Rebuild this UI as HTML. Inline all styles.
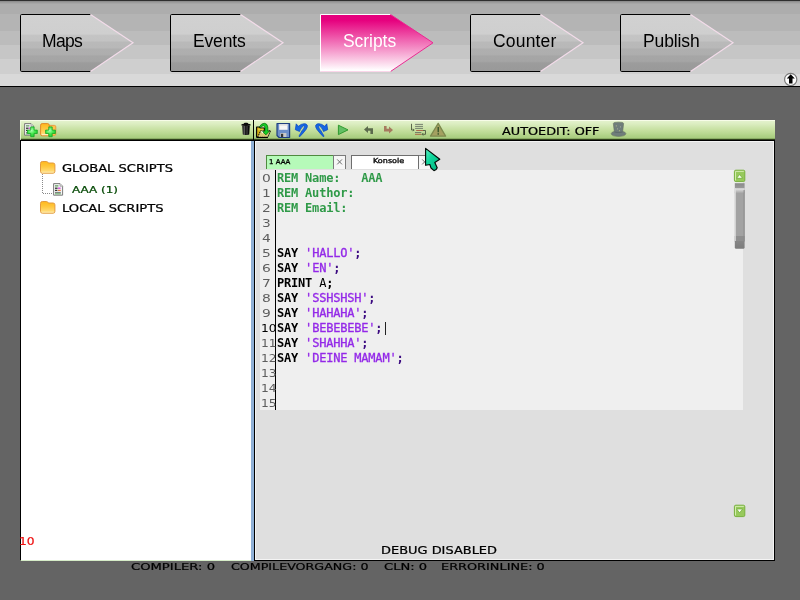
<!DOCTYPE html>
<html lang="de">
<head>
<meta charset="utf-8">
<title>Scripts</title>
<style>
html,body{margin:0;padding:0;}
body{width:800px;height:600px;overflow:hidden;background:#646464;position:relative;font-family:"Liberation Sans",sans-serif;}
.abs{position:absolute;}
#topbar{left:0;top:0;width:800px;height:87px;
 background:linear-gradient(to bottom,#2f2f2f 0px,#2f2f2f 1px,#8e8e8e 1px,#8e8e8e 2px,#9c9c9c 2px,#9c9c9c 3px,#a6a6a6 3px,#a6a6a6 4px,#adadad 4px,#adadad 14px,#b4b4b4 14px,#b4b4b4 31px,#bcbcbc 31px,#bcbcbc 45px,#c6c6c6 45px,#c6c6c6 59px,#cfcfcf 59px,#cfcfcf 74px,#d9d9d9 74px,#d9d9d9 86px,#000 86px,#000 87px);}
.nav{top:13px;width:116px;height:60px;}
.nav svg{position:absolute;left:0;top:0;}
.nav span{will-change:transform;position:absolute;left:23.6px;top:17px;text-align:left;font-size:17.5px;line-height:22px;color:#000;white-space:nowrap;}
.nav.on span{color:#fff;}
.px{will-change:transform;font-family:"DejaVu Sans","Liberation Sans",sans-serif;text-transform:uppercase;white-space:nowrap;line-height:1;}
#tbar{left:20px;top:120px;width:755px;height:20px;box-shadow:inset 1px 0 0 rgba(240,250,225,0.8);background:linear-gradient(to bottom,#f7fce8 0,#f7fce8 1px,#e3f2cc 1px,#dbedc0 4px,#d0e6b0 7px,#c6e0a0 10px,#bbd993 13px,#aed185 16px,#a8cc7f 18px,#8aac64 18px,#8aac64 19px,#2f3e1c 19px,#2f3e1c 20px);}
#tbarline{left:20px;top:140px;width:755px;height:1px;background:#000;}
#tdiv{left:253px;top:120px;width:1px;height:20px;background:#000;}
#lpanel{left:20px;top:141px;width:231px;height:420px;background:#fff;border-left:1px solid #000;box-sizing:border-box;border-bottom:1px solid #d6ecc8;}
#split{left:251px;top:141px;width:3px;height:420px;background:#8fb0d6;}
#rpanel{left:254px;top:141px;width:521px;height:420px;box-sizing:border-box;background:#dfdfdf;border-left:1px solid #000;border-right:1px solid #000;border-bottom:1px solid #000;box-shadow:inset 1px 1px 0 #f4f4f4,inset -1px -1px 0 #f4f4f4;}
#editor{left:260px;top:170px;width:483px;height:240px;background:#efefef;}
#gutterline{left:275px;top:170px;width:1px;height:240px;background:#000;}
.ln{left:261px;width:15px;height:15px;font-size:9.5px;color:#666;}
.code{will-change:transform;left:277px;margin-top:1px;height:15px;line-height:15px;font-family:"DejaVu Sans Mono","Liberation Mono",monospace;font-size:12px;letter-spacing:-0.2px;white-space:pre;color:#000;}
.code b{font-weight:bold;}
.rem{color:#2f9a48;font-weight:bold;}
.str{color:#9328e8;-webkit-text-stroke:0.3px #9328e8;}
.sem{color:#3b0a80;font-weight:bold;}
</style>
</head>
<body>
<div id="topbar" class="abs"></div>

<svg width="0" height="0" style="position:absolute">
 <defs>
  <linearGradient id="gGray" x1="0" y1="0" x2="0" y2="1">
   <stop offset="0" stop-color="#d1d1d1"/><stop offset="0.34" stop-color="#cfcfcf"/><stop offset="0.37" stop-color="#c4c4c4"/><stop offset="0.46" stop-color="#c3c3c3"/><stop offset="0.49" stop-color="#b9b9b9"/><stop offset="0.58" stop-color="#b8b8b8"/><stop offset="0.61" stop-color="#afafaf"/><stop offset="0.7" stop-color="#aeaeae"/><stop offset="0.73" stop-color="#a6a6a6"/><stop offset="0.82" stop-color="#a5a5a5"/><stop offset="0.85" stop-color="#9c9c9c"/><stop offset="1" stop-color="#999999"/>
  </linearGradient>
  <linearGradient id="gPink" x1="0" y1="0" x2="0" y2="1">
   <stop offset="0" stop-color="#e5007d"/><stop offset="0.1" stop-color="#e6007e"/><stop offset="0.98" stop-color="#ffffff"/><stop offset="1" stop-color="#ffffff"/>
  </linearGradient>
 </defs>
</svg>

<div class="abs nav" style="left:19px"><svg width="116" height="60" viewBox="0 0 116 60"><path d="M3.5 1.5 H71.5 L114 29.8 L71.5 58.5 H2.7 Q1.5 58.5 1.5 57.3 V2.7 Q1.5 1.5 2.7 1.5 Z" fill="url(#gGray)"/><path d="M71.5 58.5 H2.7 Q1.5 58.5 1.5 57.3 V2.7 Q1.5 1.5 2.7 1.5 H71.5" fill="none" stroke="#000" stroke-width="1"/><path d="M71.5 1.5 L114 29.8 L71.5 58.5" fill="none" stroke="#f3dcea" stroke-width="1.2"/></svg><span style="letter-spacing:-0.7px;margin-left:-1px">Maps</span></div>
<div class="abs nav" style="left:169px"><svg width="116" height="60" viewBox="0 0 116 60"><path d="M3.5 1.5 H71.5 L114 29.8 L71.5 58.5 H2.7 Q1.5 58.5 1.5 57.3 V2.7 Q1.5 1.5 2.7 1.5 Z" fill="url(#gGray)"/><path d="M71.5 58.5 H2.7 Q1.5 58.5 1.5 57.3 V2.7 Q1.5 1.5 2.7 1.5 H71.5" fill="none" stroke="#000" stroke-width="1"/><path d="M71.5 1.5 L114 29.8 L71.5 58.5" fill="none" stroke="#f3dcea" stroke-width="1.2"/></svg><span style="letter-spacing:-0.17px">Events</span></div>
<div class="abs nav on" style="left:319px"><svg width="116" height="60" viewBox="0 0 116 60"><path d="M1.5 1.5 H71.5 L114 29.8 L71.5 58.5 H1.5 Z" fill="url(#gPink)"/><path d="M1.5 58.5 V1.5 H71.5" fill="none" stroke="#fff" stroke-width="1"/><path d="M71.5 1.5 L114 29.8 L71.5 58.5" fill="none" stroke="#ea2a92" stroke-width="1"/><path d="M71.5 58.5 H1.5" fill="none" stroke="#fbd6ea" stroke-width="1"/></svg><span style="letter-spacing:-0.05px">Scripts</span></div>
<div class="abs nav" style="left:469px"><svg width="116" height="60" viewBox="0 0 116 60"><path d="M3.5 1.5 H71.5 L114 29.8 L71.5 58.5 H2.7 Q1.5 58.5 1.5 57.3 V2.7 Q1.5 1.5 2.7 1.5 Z" fill="url(#gGray)"/><path d="M71.5 58.5 H2.7 Q1.5 58.5 1.5 57.3 V2.7 Q1.5 1.5 2.7 1.5 H71.5" fill="none" stroke="#000" stroke-width="1"/><path d="M71.5 1.5 L114 29.8 L71.5 58.5" fill="none" stroke="#f3dcea" stroke-width="1.2"/></svg><span style="letter-spacing:0.18px">Counter</span></div>
<div class="abs nav" style="left:619px"><svg width="116" height="60" viewBox="0 0 116 60"><path d="M3.5 1.5 H71.5 L114 29.8 L71.5 58.5 H2.7 Q1.5 58.5 1.5 57.3 V2.7 Q1.5 1.5 2.7 1.5 Z" fill="url(#gGray)"/><path d="M71.5 58.5 H2.7 Q1.5 58.5 1.5 57.3 V2.7 Q1.5 1.5 2.7 1.5 H71.5" fill="none" stroke="#000" stroke-width="1"/><path d="M71.5 1.5 L114 29.8 L71.5 58.5" fill="none" stroke="#f3dcea" stroke-width="1.2"/></svg><span style="letter-spacing:-0.13px">Publish</span></div>

<!-- collapse icon -->
<svg class="abs" style="left:783px;top:72px" width="16" height="16" viewBox="0 0 16 16"><circle cx="7.7" cy="7.4" r="6.1" fill="#fff" stroke="#5e5e5e" stroke-opacity="0.8" stroke-width="1.2"/><path d="M7.7 2.2 L11.8 6.6 H9.5 V11.6 H6 V6.6 H3.7 Z" fill="#000"/></svg>

<!-- PANELS -->
<div id="tbar" class="abs"></div>
<div id="tbarline" class="abs"></div>
<div id="tdiv" class="abs"></div>
<div id="lpanel" class="abs"></div>
<div id="split" class="abs"></div>
<div id="rpanel" class="abs"></div>
<div id="editor" class="abs"></div>
<div id="gutterline" class="abs"></div>

<!--TEXTS-->
<svg class="abs px" style="left:61.5px;top:162.5px" width="113.0" height="13"><text x="0" y="9.0" font-size="9.60" fill="#000" stroke="#000" stroke-width="0.22" textLength="111.0" lengthAdjust="spacingAndGlyphs">Global Scripts</text></svg>
<svg class="abs px" style="left:71.5px;top:184px" width="48.0" height="12"><text x="0" y="8.699999999999989" font-size="9.19" fill="#064a06" stroke="#064a06" stroke-width="0.22" textLength="46.0" lengthAdjust="spacingAndGlyphs">AAA (1)</text></svg>
<svg class="abs px" style="left:61.5px;top:202.5px" width="103.5" height="13"><text x="0" y="9.0" font-size="9.60" fill="#000" stroke="#000" stroke-width="0.22" textLength="101.5" lengthAdjust="spacingAndGlyphs">Local Scripts</text></svg>
<svg class="abs px" style="left:501.5px;top:125.6px" width="99.5" height="13"><text x="0" y="9.0" font-size="9.60" fill="#000" stroke="#000" stroke-width="0.22" textLength="97.5" lengthAdjust="spacingAndGlyphs">AutoEdit: OFF</text></svg>
<svg class="abs px" style="left:381px;top:545px" width="118" height="13"><text x="0" y="9" font-size="9.60" fill="#000" stroke="#000" stroke-width="0.22" textLength="116" lengthAdjust="spacingAndGlyphs">Debug disabled</text></svg>
<svg class="abs px" style="left:131px;top:561px" width="86" height="12"><text x="0" y="8.799999999999955" font-size="9.33" fill="#000" stroke="#000" stroke-width="0.22" textLength="84" lengthAdjust="spacingAndGlyphs">Compiler: 0</text></svg>
<svg class="abs px" style="left:230.5px;top:561px" width="139.5" height="12"><text x="0" y="8.799999999999955" font-size="9.33" fill="#000" stroke="#000" stroke-width="0.22" textLength="137.5" lengthAdjust="spacingAndGlyphs">Compilevorgang: 0</text></svg>
<svg class="abs px" style="left:383.5px;top:561px" width="45.10000000000002" height="12"><text x="0" y="8.799999999999955" font-size="9.33" fill="#000" stroke="#000" stroke-width="0.22" textLength="43.10000000000002" lengthAdjust="spacingAndGlyphs">CLN: 0</text></svg>
<svg class="abs px" style="left:441.2px;top:561px" width="105.80000000000001" height="12"><text x="0" y="8.799999999999955" font-size="9.33" fill="#000" stroke="#000" stroke-width="0.22" textLength="103.80000000000001" lengthAdjust="spacingAndGlyphs">ErrorInLine: 0</text></svg>
<svg class="abs px" style="left:19.2px;top:535.6px" width="17" height="13"><text x="0" y="9.4" font-size="10.15" fill="#ee1111" stroke="#ee1111" stroke-width="0.22" textLength="15.6" lengthAdjust="spacingAndGlyphs">10</text></svg>
<!--EDITOR-->
<svg class="abs px" style="left:262.1px;top:173px" width="9.8" height="13"><text x="0" y="9" font-size="9.60" fill="#5e5e5e" textLength="8.8" lengthAdjust="spacingAndGlyphs">0</text></svg>
<svg class="abs px" style="left:262.1px;top:188px" width="9.8" height="13"><text x="0" y="9" font-size="9.60" fill="#5e5e5e" textLength="8.8" lengthAdjust="spacingAndGlyphs">1</text></svg>
<svg class="abs px" style="left:262.1px;top:203px" width="9.8" height="13"><text x="0" y="9" font-size="9.60" fill="#5e5e5e" textLength="8.8" lengthAdjust="spacingAndGlyphs">2</text></svg>
<svg class="abs px" style="left:262.1px;top:218px" width="9.8" height="13"><text x="0" y="9" font-size="9.60" fill="#5e5e5e" textLength="8.8" lengthAdjust="spacingAndGlyphs">3</text></svg>
<svg class="abs px" style="left:262.1px;top:233px" width="9.8" height="13"><text x="0" y="9" font-size="9.60" fill="#5e5e5e" textLength="8.8" lengthAdjust="spacingAndGlyphs">4</text></svg>
<svg class="abs px" style="left:262.1px;top:248px" width="9.8" height="13"><text x="0" y="9" font-size="9.60" fill="#5e5e5e" textLength="8.8" lengthAdjust="spacingAndGlyphs">5</text></svg>
<svg class="abs px" style="left:262.1px;top:263px" width="9.8" height="13"><text x="0" y="9" font-size="9.60" fill="#5e5e5e" textLength="8.8" lengthAdjust="spacingAndGlyphs">6</text></svg>
<svg class="abs px" style="left:262.1px;top:278px" width="9.8" height="13"><text x="0" y="9" font-size="9.60" fill="#5e5e5e" textLength="8.8" lengthAdjust="spacingAndGlyphs">7</text></svg>
<svg class="abs px" style="left:262.1px;top:293px" width="9.8" height="13"><text x="0" y="9" font-size="9.60" fill="#5e5e5e" textLength="8.8" lengthAdjust="spacingAndGlyphs">8</text></svg>
<svg class="abs px" style="left:262.1px;top:308px" width="9.8" height="13"><text x="0" y="9" font-size="9.60" fill="#5e5e5e" textLength="8.8" lengthAdjust="spacingAndGlyphs">9</text></svg>
<svg class="abs px" style="left:260.8px;top:323px" width="16.6" height="13"><text x="0" y="9" font-size="9.60" fill="#000" textLength="15.6" lengthAdjust="spacingAndGlyphs">10</text></svg>
<svg class="abs px" style="left:260.8px;top:338px" width="16.6" height="13"><text x="0" y="9" font-size="9.60" fill="#5e5e5e" textLength="15.6" lengthAdjust="spacingAndGlyphs">11</text></svg>
<svg class="abs px" style="left:260.8px;top:353px" width="16.6" height="13"><text x="0" y="9" font-size="9.60" fill="#5e5e5e" textLength="15.6" lengthAdjust="spacingAndGlyphs">12</text></svg>
<svg class="abs px" style="left:260.8px;top:368px" width="16.6" height="13"><text x="0" y="9" font-size="9.60" fill="#5e5e5e" textLength="15.6" lengthAdjust="spacingAndGlyphs">13</text></svg>
<svg class="abs px" style="left:260.8px;top:383px" width="16.6" height="13"><text x="0" y="9" font-size="9.60" fill="#5e5e5e" textLength="15.6" lengthAdjust="spacingAndGlyphs">14</text></svg>
<svg class="abs px" style="left:260.8px;top:398px" width="16.6" height="13"><text x="0" y="9" font-size="9.60" fill="#5e5e5e" textLength="15.6" lengthAdjust="spacingAndGlyphs">15</text></svg>
<div class="abs" style="left:266px;top:155px;width:67px;height:14px;box-sizing:border-box;background:#b6fab9;border-top:1px solid #4f8a3f;border-left:1px solid #4f8a3f;"></div>
<div class="abs" style="left:333px;top:155px;width:13px;height:14px;box-sizing:border-box;background:#f6f6f6;border:1px solid #7a7a7a;border-bottom:none;"></div>
<svg class="abs" style="left:333px;top:155px" width="13" height="14"><path d="M4.2 4.4 L9 9.4 M9 4.4 L4.2 9.4" stroke="#707070" stroke-width="1" fill="none"/></svg>
<div class="abs" style="left:351px;top:155px;width:68px;height:14px;box-sizing:border-box;background:#fff;border:1px solid #6e6e6e;border-bottom:none;"></div>
<div class="abs" style="left:419px;top:155px;width:13px;height:14px;box-sizing:border-box;background:#f6f6f6;border:1px solid #7a7a7a;border-left:none;border-bottom:none;"></div>
<svg class="abs" style="left:419px;top:155px" width="13" height="14"><path d="M3.2 4.4 L8 9.4 M8 4.4 L3.2 9.4" stroke="#707070" stroke-width="1" fill="none"/></svg>
<svg class="abs px" style="left:268.8px;top:157.2px" width="23.399999999999977" height="10"><text x="0" y="6.800000000000011" font-size="6.58" fill="#000" stroke="#000" stroke-width="0.3" textLength="21.399999999999977" lengthAdjust="spacingAndGlyphs">1 AAA</text></svg>
<svg class="abs px" style="text-transform:none;left:372.8px;top:155.8px" width="33.19999999999999" height="11"><text x="0" y="7.0" font-size="6.86" fill="#000" stroke="#000" stroke-width="0.3" textLength="31.19999999999999" lengthAdjust="spacingAndGlyphs">Konsole</text></svg>
<div class="abs code" style="top:170px"><span class="rem">REM Name:   AAA</span></div>
<div class="abs code" style="top:185px"><span class="rem">REM Author:</span></div>
<div class="abs code" style="top:200px"><span class="rem">REM Email:</span></div>
<div class="abs code" style="top:245px"><b>SAY</b> <span class="str">'HALLO'</span><span class="sem">;</span></div>
<div class="abs code" style="top:260px"><b>SAY</b> <span class="str">'EN'</span><span class="sem">;</span></div>
<div class="abs code" style="top:275px"><b>PRINT</b> A<b>;</b></div>
<div class="abs code" style="top:290px"><b>SAY</b> <span class="str">'SSHSHSH'</span><span class="sem">;</span></div>
<div class="abs code" style="top:305px"><b>SAY</b> <span class="str">'HAHAHA'</span><span class="sem">;</span></div>
<div class="abs code" style="top:320px"><b>SAY</b> <span class="str">'BEBEBEBE'</span><span class="sem">;</span></div>
<div class="abs code" style="top:335px"><b>SAY</b> <span class="str">'SHAHHA'</span><span class="sem">;</span></div>
<div class="abs code" style="top:350px"><b>SAY</b> <span class="str">'DEINE MAMAM'</span><span class="sem">;</span></div>
<div class="abs" style="left:385px;top:322px;width:1px;height:13px;background:#222"></div>

<!--ICONS-->
<svg width="0" height="0" style="position:absolute"><defs>
 <linearGradient id="gFold" x1="0" y1="0" x2="0" y2="1"><stop offset="0" stop-color="#ffb81c"/><stop offset="0.45" stop-color="#ffc840"/><stop offset="1" stop-color="#ffe28e"/></linearGradient>
 <radialGradient id="gPlus" cx="0.4" cy="0.35" r="0.7"><stop offset="0" stop-color="#b4ffb4"/><stop offset="0.5" stop-color="#48e850"/><stop offset="1" stop-color="#1cc82c"/></radialGradient>
 <linearGradient id="gTrash" x1="0" y1="0" x2="1" y2="0"><stop offset="0" stop-color="#0a0a0a"/><stop offset="0.3" stop-color="#5a5a5a"/><stop offset="0.45" stop-color="#141414"/><stop offset="0.65" stop-color="#3c3c3c"/><stop offset="0.8" stop-color="#0a0a0a"/><stop offset="1" stop-color="#000"/></linearGradient>
 <linearGradient id="gCur" x1="0" y1="0" x2="1" y2="1"><stop offset="0" stop-color="#5cf0c4"/><stop offset="0.4" stop-color="#10d69c"/><stop offset="1" stop-color="#00b07c"/></linearGradient>
 <linearGradient id="gThumb" x1="0" y1="0" x2="1" y2="0"><stop offset="0" stop-color="#d4d4d4"/><stop offset="0.25" stop-color="#a6a6a6"/><stop offset="0.75" stop-color="#a0a0a0"/><stop offset="1" stop-color="#8a8a8a"/></linearGradient>
 <linearGradient id="gThumbT" x1="0" y1="0" x2="0" y2="1"><stop offset="0" stop-color="#8a8a8a"/><stop offset="1" stop-color="#9c9c9c"/></linearGradient>
 <linearGradient id="gThumbB" x1="0" y1="0" x2="0" y2="1"><stop offset="0" stop-color="#868686"/><stop offset="1" stop-color="#7c7c7c"/></linearGradient>
 <g id="plus"><path d="M3.8 0.6 h3.4 v3.2 h3.2 v3.4 h-3.2 v3.2 h-3.4 v-3.2 h-3.2 v-3.4 h3.2 z" fill="url(#gPlus)" stroke="#18a826" stroke-width="0.8" stroke-linejoin="round"/></g>
 <g id="folder"><path d="M1.5 3.4 Q1.5 1.5 3.4 1.5 H7.4 Q8.8 1.5 9.4 3 H14 Q15.9 3 15.9 4.8 V11.4 Q15.9 13.2 14 13.2 H3.4 Q1.5 13.2 1.5 11.4 Z" fill="url(#gFold)" stroke="#e39a3e" stroke-width="1"/><path d="M2.6 12.2 H14.8" stroke="#fff2c8" stroke-width="0.8" opacity="0.8"/></g>
 <g id="fileico"><path d="M0.6 0.6 H7 L9.6 3.2 V12.2 H0.6 Z" fill="#f4f4f4" stroke="#6e6e6e" stroke-width="0.9"/><path d="M7 0.6 V3.2 H9.6" fill="#ddd" stroke="#8a8a8a" stroke-width="0.6"/><rect x="2" y="2.4" width="3.4" height="1" fill="#3a8a3a"/><rect x="2" y="4.6" width="2.6" height="1.2" fill="#222"/><rect x="5" y="4.6" width="2.6" height="1.2" fill="#d23be0"/><rect x="2" y="6.8" width="2.4" height="1.1" fill="#222"/><rect x="5" y="6.8" width="2.8" height="1.1" fill="#e8702a"/><rect x="2" y="8.9" width="5.8" height="0.9" fill="#666"/><rect x="2" y="10.4" width="5.8" height="0.9" fill="#4a9a4a"/></g>
</defs></svg>

<!-- new file -->
<svg class="abs" style="left:24px;top:123px" width="15" height="16"><use href="#fileico"/><use href="#plus" x="2.9" y="3.3"/></svg>
<!-- new folder -->
<svg class="abs" style="left:40px;top:123px" width="17" height="16"><rect x="6" y="2.4" width="9.8" height="10" rx="1.4" fill="#ffc34a" stroke="#e8963a" stroke-width="0.9"/><rect x="0.6" y="0.6" width="8.6" height="12.2" rx="1.6" fill="url(#gFold)" stroke="#e08a2a" stroke-width="1"/><path d="M1.8 11.6 H8" stroke="#fff4d0" stroke-width="1" opacity="0.9"/><use href="#plus" x="5" y="3.3"/></svg>
<!-- trash -->
<svg class="abs" style="left:240px;top:122px" width="12" height="14"><path d="M2.2 3.4 H9.8 L9.2 12.4 Q6 13.6 2.8 12.4 Z" fill="url(#gTrash)"/><path d="M1.1 3.3 Q1.1 2 2.4 1.9 L3.8 1.7 Q4 0.8 5 0.8 H7 Q8 0.8 8.2 1.7 L9.6 1.9 Q10.9 2 10.9 3.3 Q6 4.5 1.1 3.3 Z" fill="#0c0c0c"/></svg>
<!-- open -->
<svg class="abs" style="left:255px;top:122px" width="17" height="17"><path d="M1.6 5 H4.4 L5.4 6 H9.4 V15.2 H1.6 Z" fill="#d2ae14" stroke="#000" stroke-width="1.1" stroke-linejoin="round"/><path d="M3 6.6 H8.4 V8.4 H3 Z" fill="#eed44a" opacity="0.7"/><path d="M2.6 15.3 L5.6 8.8 H15.6 L12.8 15.3 Z" fill="#d6c878" stroke="#000" stroke-width="1" stroke-dasharray="1.5 0.7"/><path d="M2 15.5 H12.8" stroke="#000" stroke-width="1.1"/><path d="M6 9.6 L7.8 8.6 L9.2 10 L7.4 11.4 Z" fill="#fff" opacity="0.9"/><path d="M4.4 4.8 Q6.4 1.2 9.4 1.3 Q12.4 1.6 12.8 5 L12.9 9 L14.3 9.2 L10.9 12.9 L7.6 9.6 L9.9 9.3 L10 6 Q9.8 3.8 8.6 3.7 Q7 3.8 5.8 5.4 Z" fill="#16cf26" stroke="#04640c" stroke-width="0.7" stroke-linejoin="round"/></svg>
<!-- save -->
<svg class="abs" style="left:276px;top:122px" width="15" height="17"><path d="M1 1.5 H13.6 V15.5 H3 L1 13.5 Z" fill="#6d8fc9" stroke="#1f3f80" stroke-width="1.2" stroke-linejoin="round"/><rect x="3.2" y="2.2" width="8.4" height="5.6" fill="#f6f6f6"/><rect x="3.2" y="2.2" width="8.4" height="1.4" fill="#dcdcdc"/><rect x="4.4" y="11" width="6" height="4" fill="#c8c8c8"/><rect x="5" y="11.8" width="2.2" height="3.2" fill="#333"/></svg>
<!-- undo -->
<svg class="abs" style="left:294px;top:123px" width="15" height="15"><path d="M5.5 13.9 Q9.6 9.8 12.1 6.4 Q14 3.6 13.2 2 Q12.2 0.5 10 0.7 Q7 0.9 4.4 3.3 L2.2 0.85 L1.3 6.7 L5.5 8.5 L6.4 6.5 Q7.6 4.4 9.4 2.95 Q10.4 2.9 10.6 3.4 Q9.9 5.6 7.9 7.9 Q6.4 10.6 5 13 Z" fill="#1667e2" stroke="#0b48bd" stroke-width="0.7" stroke-linejoin="round"/></svg>
<!-- redo -->
<svg class="abs" style="left:313.8px;top:123px" width="15" height="15"><g transform="translate(15 0) scale(-1 1)"><path d="M5.5 13.9 Q9.6 9.8 12.1 6.4 Q14 3.6 13.2 2 Q12.2 0.5 10 0.7 Q7 0.9 4.4 3.3 L2.2 0.85 L1.3 6.7 L5.5 8.5 L6.4 6.5 Q7.6 4.4 9.4 2.95 Q10.4 2.9 10.6 3.4 Q9.9 5.6 7.9 7.9 Q6.4 10.6 5 13 Z" fill="#1667e2" stroke="#0b48bd" stroke-width="0.7" stroke-linejoin="round"/></g></svg>
<!-- play -->
<svg class="abs" style="left:337px;top:124px" width="13" height="12"><path d="M1.4 1.2 L11 5.9 L1.4 10.6 Z" fill="#63bf63" stroke="#2f9a2f" stroke-width="1" stroke-linejoin="round"/></svg>
<!-- back -->
<svg class="abs" style="left:363px;top:125px" width="12" height="10"><path d="M1 4.4 L5 1 V3.2 H10 V9 H7.4 V5.8 H5 V8 Z" fill="#5b6a4c"/></svg>
<!-- forward -->
<svg class="abs" style="left:383px;top:125px" width="12" height="10"><path d="M10 5 L6 8.6 V6.4 H1 V1 H3.6 V3.8 H6 V1.6 Z" fill="#a67a5e"/></svg>
<!-- list -->
<svg class="abs" style="left:410px;top:123px" width="17" height="14"><g stroke="#6c7666" stroke-width="0.9" fill="none"><path d="M5.1 1.4 H13 M5.1 3.4 H13 M5.1 5.4 H13 M5 9.5 H11.3"/></g><g stroke="#4e5a40" stroke-width="0.9" fill="none"><path d="M1.5 0.8 V7 H4 M3 5.8 L4.2 7 L3 8.2"/><path d="M13 7.5 H15.5 V11.3 H12 M13.2 10.1 L12 11.3 L13.2 12.5"/></g><path d="M6.2 7.5 H13 M5 11.3 H11.3" stroke="#a85a40" stroke-width="0.9"/></svg>
<!-- warning -->
<svg class="abs" style="left:429px;top:122px" width="18" height="16"><path d="M9.2 1.4 L16.6 14.2 H1.5 Z" fill="#a4a060" stroke="#7d8a4e" stroke-width="1.3" stroke-linejoin="round"/><path d="M8.5 5 H10 V10.3 H8.5 Z" fill="#3f5a2c"/><rect x="8.5" y="11.2" width="1.5" height="1.5" fill="#3f5a2c"/></svg>
<!-- hat -->
<svg class="abs" style="left:610px;top:121px" width="18" height="17"><path d="M3.3 2.6 Q3.4 1.6 5 1.4 Q8.5 0.9 12 1.4 Q13.5 1.6 13.6 2.6 L12.7 10.4 Q15.4 10.9 15.9 12.6 Q15.4 15.3 8.5 15.4 Q1.6 15.3 1.2 12.6 Q1.7 10.9 4.3 10.4 Z" fill="#6f7d7b" stroke="#66745e" stroke-width="0.6"/><path d="M4.3 10.2 Q8.5 11.6 12.7 10.2 L12.6 11.4 Q8.5 12.8 4.4 11.4 Z" fill="#5f6d6b"/><rect x="5.8" y="4.4" width="1" height="1" fill="#b9c08a"/><rect x="10" y="5.4" width="1" height="1" fill="#a9b0a0"/><rect x="7" y="7.4" width="1" height="1" fill="#aab09a"/><rect x="9" y="9.2" width="1" height="1" fill="#b0b884"/></svg>

<!-- tree -->
<svg class="abs" style="left:39px;top:160px" width="18" height="16"><use href="#folder" x="0" y="0"/></svg>
<svg class="abs" style="left:39px;top:200px" width="18" height="16"><use href="#folder" x="0" y="0"/></svg>
<svg class="abs" style="left:40px;top:174px" width="14" height="22"><path d="M2.5 0 V19.5 H12" fill="none" stroke="#8a8a8a" stroke-width="1" stroke-dasharray="1 1"/></svg>
<svg class="abs" style="left:53px;top:183px" width="12" height="14"><use href="#fileico"/></svg>

<!-- scrollbar -->
<svg class="abs" style="left:733px;top:169px" width="14" height="82"><defs><linearGradient id="gHi" x1="0" y1="0" x2="0" y2="1"><stop offset="0" stop-color="#e6e6e6"/><stop offset="1" stop-color="#a3a3a3"/></linearGradient></defs><rect x="1.4" y="1.2" width="10.4" height="11.4" rx="1.4" fill="#97c95c" stroke="#78b13e" stroke-width="1"/><path d="M2.5 11.4 V2.4 H10.8" fill="none" stroke="#d9efb8" stroke-width="0.9"/><path d="M3.6 9.3 L6.6 5.5 L9.6 9.3 Z" fill="#fbfff2" stroke="#69a832" stroke-width="0.7" stroke-linejoin="round"/>
 <rect x="1.8" y="14.2" width="9.8" height="5.4" fill="url(#gThumbT)"/>
 <rect x="1.8" y="19.4" width="9.8" height="53" fill="#a2a2a2"/>
 <rect x="1.8" y="19.4" width="9.8" height="4.8" fill="url(#gHi)"/>
 <rect x="1.8" y="67" width="9.8" height="5.4" fill="#8e8e8e"/>
 <path d="M2.3 19.4 V72" stroke="#dedede" stroke-width="1" fill="none"/><path d="M11.1 21 V72" stroke="#8a8a8a" stroke-width="1" fill="none"/>
 <path d="M1.8 72 H11.6 V78.6 Q11.4 79.8 10.4 79.8 H3 Q2 79.8 1.8 78.6 Z" fill="url(#gThumbB)"/></svg>
<svg class="abs" style="left:733px;top:504px" width="14" height="15"><rect x="1.4" y="1.2" width="10.4" height="11.4" rx="1.4" fill="#97c95c" stroke="#78b13e" stroke-width="1"/><path d="M2.5 11.4 V2.4 H10.8" fill="none" stroke="#d9efb8" stroke-width="0.9"/><path d="M3.6 5 L9.6 5 L6.6 8.8 Z" fill="#fbfff2" stroke="#69a832" stroke-width="0.7" stroke-linejoin="round"/></svg>

<!-- cursor -->
<svg class="abs" style="left:422px;top:145px" width="22" height="29"><path d="M3.6 3.4 L17.8 14.2 L12.8 17.4 L15.2 22.7 Q14.4 25 12 25.6 L9 23 L7.9 19.5 L3.6 20.3 Z" fill="url(#gCur)" stroke="#020a06" stroke-width="1.15" stroke-linejoin="round"/></svg>

<!--CONTENT-->
</body>
</html>
